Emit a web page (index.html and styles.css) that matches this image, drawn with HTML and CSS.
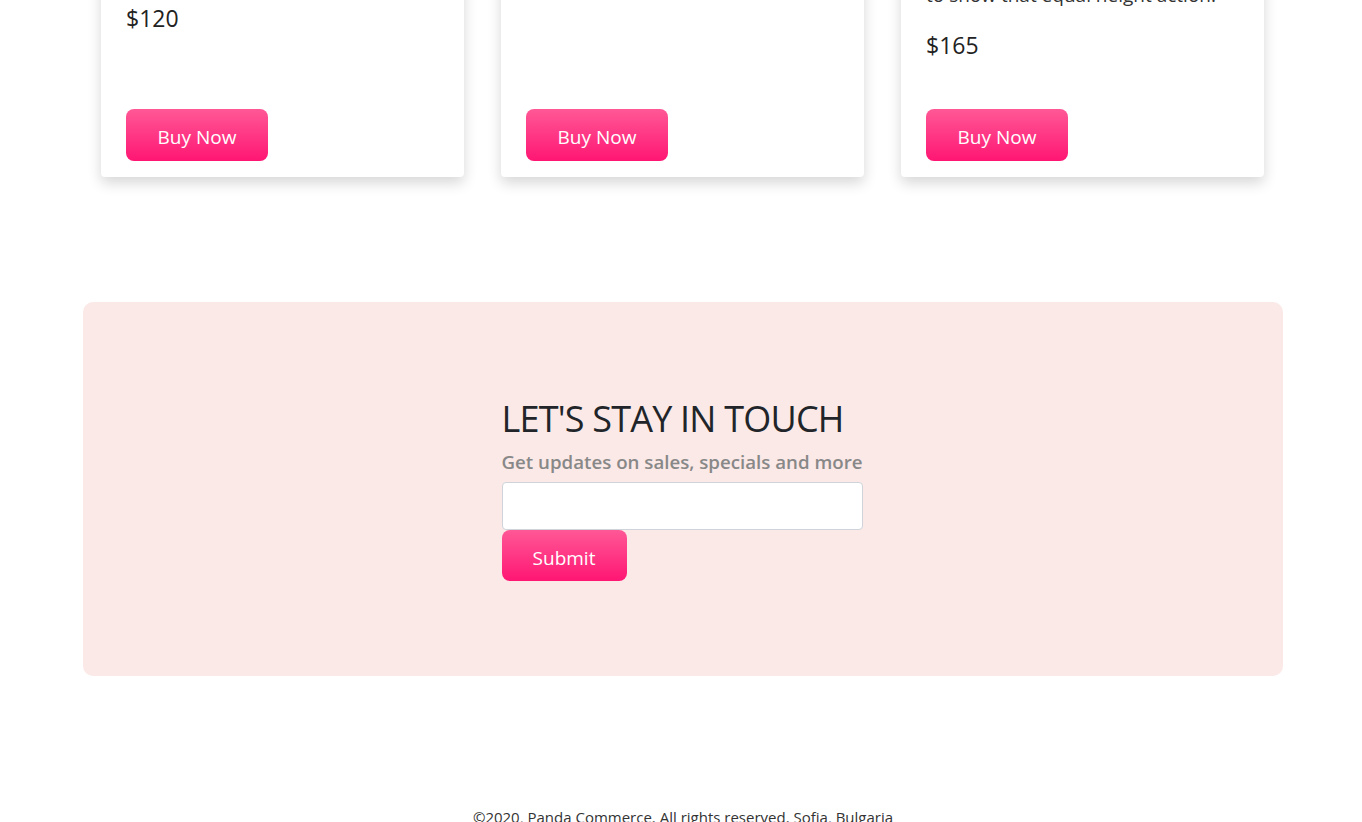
FILE: index.html
```html
<!DOCTYPE html>
<html lang="en">
<head>
<meta charset="utf-8">
<title>Panda Commerce</title>
<link rel="stylesheet" href="styles.css">
</head>
<body>
<main class="page">
  <section class="products">
    <article class="card">
      <p class="card-text">This is a wider card with supporting text.</p>
      <p class="price">$120</p>
      <button class="btn" type="button">Buy Now</button>
    </article>
    <article class="card">
      <p class="price">$140</p>
      <button class="btn" type="button">Buy Now</button>
    </article>
    <article class="card">
      <p class="card-text">This card has even longer content than<br>to show that equal height action.</p>
      <p class="price">$165</p>
      <button class="btn" type="button">Buy Now</button>
    </article>
  </section>

  <section class="newsletter">
    <form class="newsletter-form">
      <h2 class="newsletter-title">LET'S STAY IN TOUCH</h2>
      <p class="newsletter-sub">Get updates on sales, specials and more</p>
      <input class="newsletter-input" type="email" aria-label="Email">
      <button class="btn btn-submit" type="button">Submit</button>
    </form>
  </section>

  <footer class="footer">
    <p>©2020, Panda Commerce. All rights reserved. Sofia, Bulgaria</p>
  </footer>
</main>
</body>
</html>
```

FILE: styles.css
```css
* { box-sizing: border-box; }
html, body { margin: 0; padding: 0; background: #fff; }
body {
  font-family: "Open Sans", "Noto Sans", sans-serif;
  color: #212529;
  overflow: hidden;
}
.page {
  width: 1200px;
  margin-left: 83px;
}
.products {
  display: grid;
  grid-template-columns: repeat(3, 363px);
  column-gap: 37px;
  margin-top: -70px;
  padding-left: 18px;
}
.card {
  display: flex;
  flex-direction: column;
  align-items: flex-start;
  background: #fff;
  border-radius: 4px;
  padding: 25px 25px 16px;
  box-shadow: 0 6px 14px rgba(0, 0, 0, 0.16);
}
.card-text {
  margin: 0 0 18px;
  font-size: 19px;
  line-height: 27px;
  color: #333;
  white-space: nowrap;
}
.price {
  margin: 0 0 46px;
  font-size: 23px;
  line-height: 36px;
  color: #222;
}
.btn {
  font-family: inherit;
  border: none;
  border-radius: 8px;
  color: #fff;
  background: linear-gradient(to bottom, #ff5896, #ff1673);
  font-size: 19px;
  line-height: 28px;
  height: 52px;
  width: 142px;
  padding: 4px 0 0;
  cursor: pointer;
}
.card .btn { margin-top: auto; }
.newsletter {
  margin-top: 125px;
  height: 374px;
  background: #fbe9e7;
  border-radius: 10px;
  display: flex;
  align-items: center;
  justify-content: center;
}
.newsletter-form {
  width: 361px;
  margin-left: -2px;
  display: flex;
  flex-direction: column;
  align-items: flex-start;
}
.newsletter-title {
  margin: 0 0 8px;
  font-size: 36px;
  font-weight: 400;
  line-height: 44px;
  letter-spacing: -0.8px;
  color: #212529;
  white-space: nowrap;
}
.newsletter-sub {
  margin: 0 0 7px;
  font-size: 18.7px;
  line-height: 26px;
  font-weight: 600;
  color: #888;
  white-space: nowrap;
}
.newsletter-input {
  width: 361px;
  height: 48px;
  border: 1px solid #ced4da;
  border-radius: 4px;
  background: #fff;
  font-size: 16px;
  padding: 6px 12px;
}
.btn-submit {
  width: 125px;
  height: 51px;
}
.footer {
  margin-top: 131px;
  text-align: center;
  font-size: 15px;
  color: #333;
}
.footer p { margin: 0; }
```
